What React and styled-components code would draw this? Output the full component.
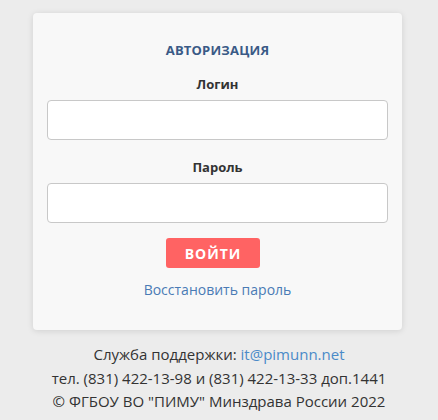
import React from 'react';
import styled, { createGlobalStyle } from 'styled-components';

const GlobalStyle = createGlobalStyle`
    html, body {
        margin: 0;
        padding: 0;
        background: #ececec;
        font-family: "Open Sans", "Liberation Sans", sans-serif;
        color: #333;
    }
`;

const Page = styled.div`
    width: 438px;
    min-height: 420px;
    padding-top: 13px;
    box-sizing: border-box;
`;

const Card = styled.form`
    width: 369px;
    margin: 0 0 0 33px;
    box-sizing: border-box;
    padding: 28px 14px 31px;
    background: #f8f8f8;
    border-radius: 4px;
    box-shadow: 0 1px 6px rgba(0, 0, 0, 0.12);
    display: flex;
    flex-direction: column;
    align-items: center;
`;

const Title = styled.h3`
    margin: 0 0 16px;
    font-size: 13px;
    font-weight: 700;
    color: #3a5a86;
    letter-spacing: 0.2px;
`;

const Label = styled.label`
    font-size: 13px;
    font-weight: 700;
    color: #333;
    margin-bottom: 7px;
`;

const Input = styled.input`
    width: 100%;
    height: 40px;
    box-sizing: border-box;
    border: 1px solid #c8c8c8;
    border-radius: 4px;
    background: #fff;
    margin-bottom: ${p => p.$last ? '15px' : '18px'};
    font: inherit;
    padding: 0 10px;
`;

const Button = styled.button`
    width: 94px;
    height: 30px;
    border: none;
    border-radius: 3px;
    background: #ff6363;
    color: #fff;
    font-family: inherit;
    font-weight: 700;
    font-size: 14px;
    letter-spacing: 1px;
    cursor: pointer;
    margin: 0 9px 12px 0;
`;

const Link = styled.a`
    font-size: 14px;
    color: #4a7bb5;
    text-decoration: none;
`;

const Footer = styled.div`
    width: 438px;
    text-align: center;
    margin-top: 13px;
    font-size: 15px;
    line-height: 23.5px;
    color: #333;
`;

const Mail = styled.a`
    color: #4a8ac8;
    text-decoration: none;
`;

const App = () => {
    return (
        <Page>
            <GlobalStyle />
            <Card onSubmit={e => e.preventDefault()}>
                <Title>АВТОРИЗАЦИЯ</Title>
                <Label>Логин</Label>
                <Input type="text" name="login" />
                <Label>Пароль</Label>
                <Input type="password" name="password" $last />
                <Button type="submit">ВОЙТИ</Button>
                <Link href="#">Восстановить пароль</Link>
            </Card>
            <Footer>
                <div>Служба поддержки: <Mail href="#">it@pimunn.net</Mail></div>
                <div>тел. (831) 422-13-98 и (831) 422-13-33 доп.1441</div>
                <div>© ФГБОУ ВО "ПИМУ" Минздрава России 2022</div>
            </Footer>
        </Page>
    );
}

export default App;
